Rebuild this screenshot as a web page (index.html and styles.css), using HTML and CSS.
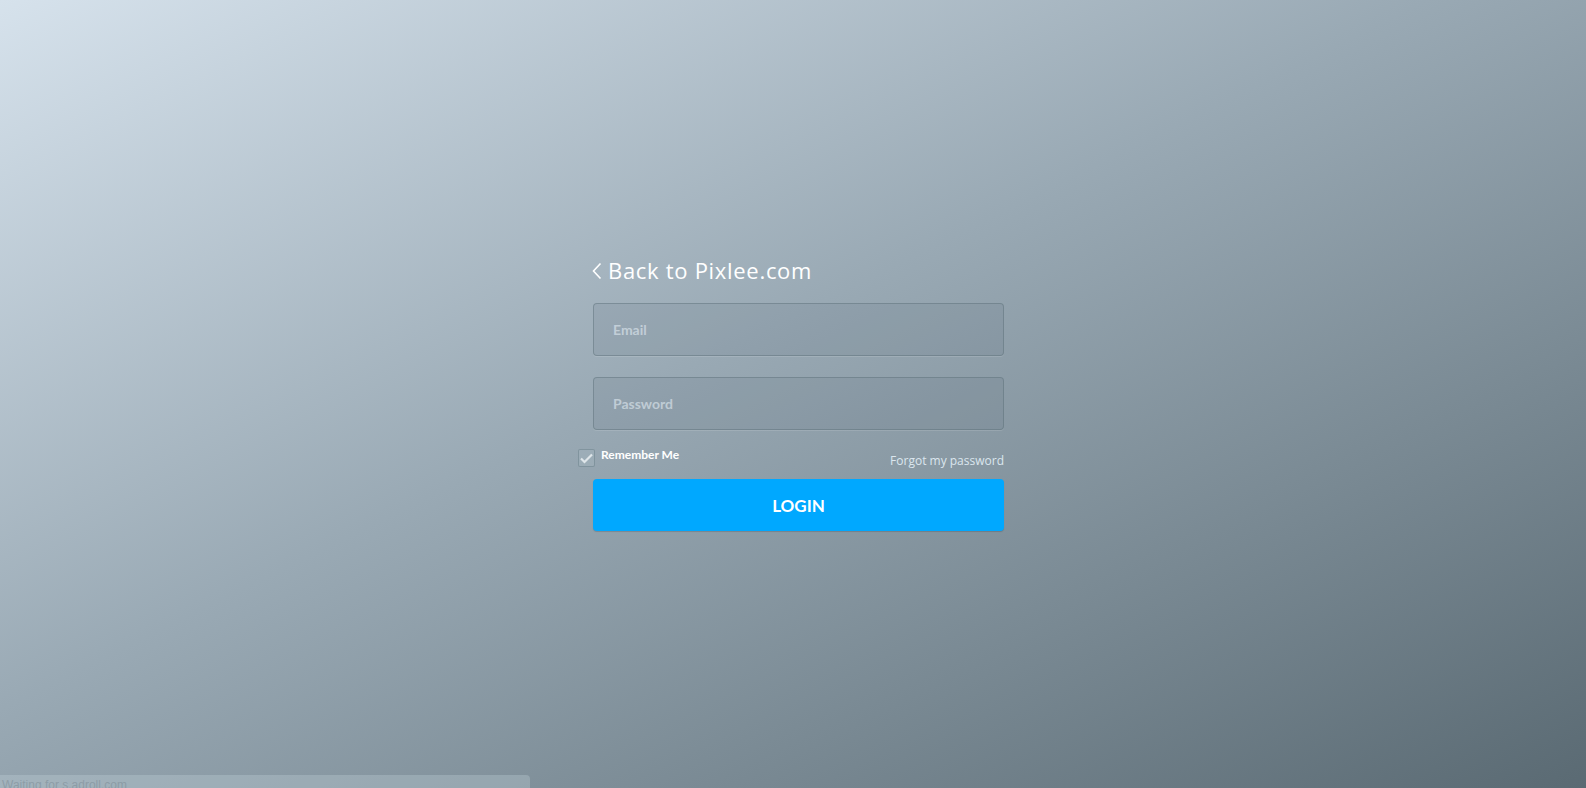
FILE: index.html
```html
<!DOCTYPE html>
<html>
<head>
<meta charset="utf-8">
<title>Pixlee Login</title>
<link rel="stylesheet" href="styles.css">
</head>
<body>
<main class="page">
  <div class="login">
    <a class="back" href="#">
      <svg class="chev" width="10" height="18" viewBox="0 0 10 18"><path d="M8.5 1.5 L1.5 9 L8.5 16.5" fill="none" stroke="#fff" stroke-width="1.6"/></svg>
      <span>Back to Pixlee.com</span>
    </a>
    <div class="field"><span class="ph">Email</span></div>
    <div class="field field-pw"><span class="ph">Password</span></div>
    <div class="row">
      <label class="remember">
        <span class="box"><svg width="15" height="13" viewBox="0 0 15 13"><path d="M2 6.5 L5.5 10 L13 2.5" fill="none" stroke="#dfe6ea" stroke-width="2.2"/></svg></span>
        <span class="rtext">Remember Me</span>
      </label>
      <a class="forgot" href="#">Forgot my password</a>
    </div>
    <button class="btn">LOGIN</button>
  </div>
</main>
<div class="status">Waiting for s.adroll.com</div>
</body>
</html>
```
FILE: styles.css
```css
html, body {
  margin: 0;
  height: 100%;
}
body {
  background: linear-gradient(to bottom right, #d6e2ec 0%, #99a9b4 45%, #5a6a73 100%);
  font-family: Lato, "Open Sans", sans-serif;
  overflow: hidden;
}
.page {
  height: 100%;
  box-sizing: border-box;
  padding-top: 255px;
  display: flex;
  flex-direction: column;
}
.login {
  width: 411px;
  margin-left: calc(50% - 200px);
  display: flex;
  flex-direction: column;
}
.back {
  display: flex;
  align-items: center;
  gap: 6px;
  color: #fff;
  text-decoration: none;
  font-family: "Open Sans", Lato, sans-serif;
  font-size: 22px;
  letter-spacing: 0.7px;
  height: 30px;
  margin-left: -1px;
  margin-bottom: 18px;
}
.back .chev { margin-top: 1px; }
.field {
  height: 51px;
  border: 1px solid rgba(90,110,120,0.45);
  border-radius: 4px;
  background: rgba(80,100,112,0.12);
  box-shadow: 0 1px 0 rgba(255,255,255,0.12);
  display: flex;
  align-items: center;
  padding-left: 19px;
}
.field-pw { margin-top: 21px; }
.ph {
  color: rgba(225,235,242,0.6);
  font-size: 14px;
  font-weight: 700;
}
.row {
  display: flex;
  justify-content: space-between;
  align-items: flex-start;
  margin-top: 19px;
  height: 30px;
}
.remember {
  display: flex;
  align-items: flex-start;
  gap: 6px;
  margin-left: -15px;
}
.box {
  width: 15px;
  height: 16px;
  border: 1px solid rgba(110,130,140,0.6);
  border-radius: 2px;
  background: rgba(170,185,195,0.35);
  display: flex;
  align-items: center;
  justify-content: center;
}
.rtext {
  color: #fff;
  font-size: 12px;
  font-weight: 700;
  line-height: 12px;
  margin-top: 0;
}
.forgot {
  color: #dbe6ee;
  font-family: "Open Sans", Lato, sans-serif;
  font-size: 12px;
  text-decoration: none;
  margin-top: 3px;
}
.btn {
  height: 52px;
  border: none;
  border-radius: 4px;
  background: #00a8ff;
  color: #fff;
  font-family: inherit;
  font-size: 17px;
  font-weight: 700;
  box-shadow: 0 1px 1px rgba(0,0,0,0.15);
  cursor: pointer;
}
.status {
  position: absolute;
  left: 0;
  bottom: 0;
  width: 528px;
  height: 13px;
  background: rgba(200,215,222,0.3);
  border-top-right-radius: 4px;
  color: rgba(120,135,145,0.5);
  font-family: "Segoe UI", "Liberation Sans", sans-serif;
  font-size: 12px;
  line-height: 20px;
  padding-left: 2px;
  overflow: hidden;
  white-space: nowrap;
}
```
